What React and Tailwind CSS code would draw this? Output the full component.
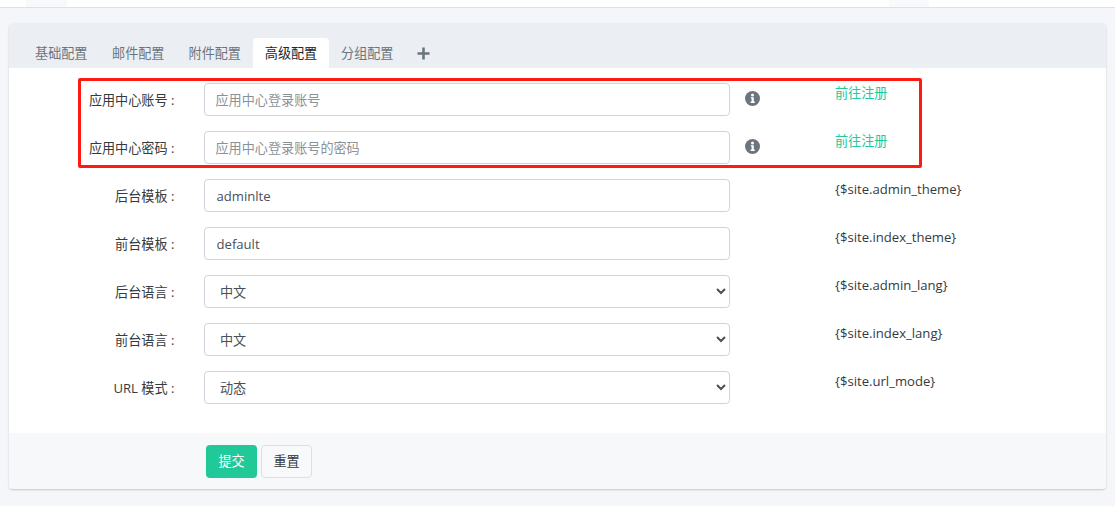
import React from 'react';

const FONT = "font-['Open_Sans','Noto_Sans_CJK_SC',sans-serif]";

const rows = [
    { label: '应用中心账号', placeholder: '应用中心登录账号', info: true, link: '前往注册' },
    { label: '应用中心密码', placeholder: '应用中心登录账号的密码', info: true, link: '前往注册' },
    { label: '后台模板', value: 'adminlte', tag: '{$site.admin_theme}' },
    { label: '前台模板', value: 'default', tag: '{$site.index_theme}' },
    { label: '后台语言', select: '中文', tag: '{$site.admin_lang}' },
    { label: '前台语言', select: '中文', tag: '{$site.index_lang}' },
    { label: 'URL 模式', select: '动态', tag: '{$site.url_mode}' },
];

const tabs = ['基础配置', '邮件配置', '附件配置', '高级配置', '分组配置'];

function InfoIcon() {
    return (
        <svg width="15" height="15" viewBox="0 0 15 15" className="mb-[2px] block">
            <circle cx="7.5" cy="7.5" r="7.5" fill="#6c757d" />
            <circle cx="7.5" cy="3.9" r="1.5" fill="#fff" />
            <path d="M5.8 6.2h3v4.4h1v1.3H5.6v-1.3h1V7.5h-.8z" fill="#fff" />
        </svg>
    );
}

function Row({ row }) {
    const box =
        'h-[33px] w-[526px] rounded-[4px] border border-[#ced4da] bg-white text-[13.125px] text-[#495057] outline-none';
    return (
        <div className="flex h-[33px] items-start">
            <label className="w-[166px] shrink-0 pr-[0.5px] pt-[7px] text-right text-[13.125px] leading-[20px] text-[#343a40]">
                {row.label}
                <span className="ml-[3.5px]">:</span>
            </label>
            <div className="ml-[29px] shrink-0">
                {row.select ? (
                    <select className={`${box} block px-[11px]`} defaultValue={row.select}>
                        <option>{row.select}</option>
                    </select>
                ) : (
                    <input
                        className={`${box} block placeholder:text-[#8a9299] ${row.value ? 'px-[11.5px]' : 'px-[10.5px]'}`}
                        placeholder={row.placeholder}
                        defaultValue={row.value}
                    />
                )}
            </div>
            <div className="ml-[15px] flex h-[33px] w-[90px] shrink-0 items-center">
                {row.info && <InfoIcon />}
            </div>
            <div className="pt-[1px] text-[13.125px] leading-[18px]">
                {row.link ? (
                    <a className="text-[#20c997]">{row.link}</a>
                ) : (
                    <span className="text-[#343a40]">{row.tag}</span>
                )}
            </div>
        </div>
    );
}

export default function App() {
    return (
        <div className={`${FONT} relative h-[506px] overflow-hidden bg-[#f4f6f9]`}>
            <div className="flex h-[8px] border-b border-[#dee2e6] bg-white">
                <div className="ml-[26px] w-[41px] bg-[#f8f9fa]" />
                <div className="ml-[822px] w-[40px] bg-[#f8f9fa]" />
            </div>
            <div className="mx-[9px] mt-[15px] w-[1097px] overflow-hidden rounded-[4px] bg-white shadow-[0_1px_2px_rgba(0,0,0,0.2)]">
                <div className="flex h-[45px] items-end bg-[#ebeef2] pl-[14px]">
                    {tabs.map((tab) => (
                        <div
                            key={tab}
                            className={
                                tab === '高级配置'
                                    ? 'flex h-[30px] w-[76px] items-center justify-center rounded-t-[4px] bg-white pl-[1px] pt-[2px] text-[13.125px] text-[#212529]'
                                    : 'flex h-[30px] w-[76.5px] items-center justify-center pl-[1px] pt-[2px] text-[13.125px] text-[#6c757d] first:pl-0'
                            }
                        >
                            {tab}
                        </div>
                    ))}
                    <svg width="13" height="13" viewBox="0 0 13 13" className="mb-[8px] ml-[12px]">
                        <path d="M6.5 0.5v12M0.5 6.5h12" stroke="#6c757d" strokeWidth="2.6" />
                    </svg>
                </div>
                <div className="flex h-[365px] flex-col gap-[15px] pt-[15px]">
                    {rows.map((row) => (
                        <Row key={row.label} row={row} />
                    ))}
                </div>
                <div className="flex h-[56px] gap-1 bg-[#f7f8fa] pl-[197px] pt-[12px]">
                    <button className="h-[33px] w-[51px] rounded-[4px] bg-[#20c997] text-[13.125px] text-white">
                        提交
                    </button>
                    <button className="h-[33px] w-[51px] rounded-[4px] border border-[#dcdfe3] bg-[#f8f9fa] text-[13.125px] text-[#343a40]">
                        重置
                    </button>
                </div>
            </div>
            {/* annotation drawn over the form */}
            <div className="absolute left-[78px] top-[78px] h-[90px] w-[844px] rounded-[2px] border-[3px] border-[#ff1a12]" />
        </div>
    );
}
